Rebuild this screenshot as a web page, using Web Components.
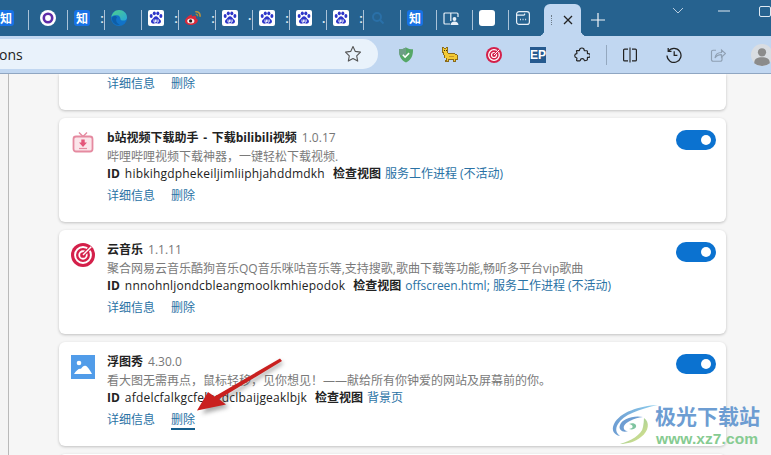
<!DOCTYPE html>
<html lang="zh">
<head>
<meta charset="utf-8">
<title>扩展</title>
<style>
  html, body { margin: 0; height: 100%; overflow: hidden; background: #f6f6f6; }
  body { font-family: "Open Sans", "Noto Sans CJK SC", sans-serif; }
</style>
</head>
<body>
<browser-window>
  <tab-strip slot="tabs">
    <strip-tab first><app-icon name="zhi"></app-icon></strip-tab>
    <strip-tab wide><app-icon name="ring"></app-icon></strip-tab>
    <strip-tab dots=":"><app-icon name="zhi"></app-icon></strip-tab>
    <strip-tab><app-icon name="edge"></app-icon></strip-tab>
    <strip-tab dots=":"><app-icon name="baidu"></app-icon></strip-tab>
    <strip-tab dots=":"><app-icon name="weibo"></app-icon></strip-tab>
    <strip-tab dots="·"><app-icon name="baidu"></app-icon></strip-tab>
    <strip-tab dots=":"><app-icon name="baidu"></app-icon></strip-tab>
    <strip-tab dots="."><app-icon name="baidu"></app-icon></strip-tab>
    <strip-tab dots=":"><app-icon name="baidu"></app-icon></strip-tab>
    <strip-tab><app-icon name="search"></app-icon></strip-tab>
    <strip-tab narrow><app-icon name="zhi"></app-icon></strip-tab>
    <strip-tab narrow><app-icon name="book"></app-icon></strip-tab>
    <strip-tab narrow><app-icon name="blank"></app-icon></strip-tab>
    <strip-tab narrow><app-icon name="win"></app-icon></strip-tab>
  </tab-strip>
  <tool-bar slot="toolbar">
    <app-icon name="shield"></app-icon>
    <app-icon name="cat"></app-icon>
    <app-icon name="target"></app-icon>
    <app-icon name="ep"></app-icon>
    <app-icon name="puzzle"></app-icon>
    <app-icon slot="after" name="split"></app-icon>
    <app-icon slot="after" name="history"></app-icon>
    <app-icon slot="after" name="share"></app-icon>
    <app-icon slot="after" name="avatar" size="22"></app-icon>
  </tool-bar>

  <ext-card links-only></ext-card>

  <ext-card ext-name="b站视频下载助手 - 下载bilibili视频" version="1.0.17"
    desc="哔哩哔哩视频下载神器，一键轻松下载视频." ext-id="hibkihgdphekeiljimliiphjahddmdkh">
    <app-icon slot="icon" name="tv" size="24"></app-icon>
    <a>服务工作进程</a> <a>(不活动)</a>
  </ext-card>

  <ext-card ext-name="云音乐" version="1.1.11"
    desc="聚合网易云音乐酷狗音乐QQ音乐咪咕音乐等,支持搜歌,歌曲下载等功能,畅听多平台vip歌曲" ext-id="nnnohnljondcbleangmoolkmhiepodok">
    <app-icon slot="icon" name="target" size="24"></app-icon>
    <a>offscreen.html;</a> <a>服务工作进程</a> <a>(不活动)</a>
  </ext-card>

  <ext-card ext-name="浮图秀" version="4.30.0" focused
    desc="看大图无需再点，鼠标轻移，见你想见！——献给所有你钟爱的网站及屏幕前的你。" ext-id="afdelcfalkgcfelngdclbaijgeaklbjk">
    <app-icon slot="icon" name="picture" size="24"></app-icon>
    <a>背景页</a>
  </ext-card>

  <ext-card blank></ext-card>

  <red-arrow slot="overlay"></red-arrow>
  <site-mark slot="overlay"></site-mark>
</browser-window>

<script>
  const ICONS = {
    zhi: `<div style="width:16px;height:16px;border-radius:3px;background:#1772e6;color:#fff;font:700 12px/16px 'Noto Sans CJK SC',sans-serif;text-align:center">知</div>`,
    ring: `<svg viewBox="0 0 16 16"><circle cx="8" cy="8" r="8" fill="#fff"/><circle cx="8" cy="8" r="4.2" fill="none" stroke="#5f2ca8" stroke-width="2.6"/></svg>`,
    edge: `<svg viewBox="0 0 16 16"><defs><linearGradient id="e1" x1="0" y1="0" x2="1" y2="1"><stop offset="0" stop-color="#4fd08a"/><stop offset="1" stop-color="#27a5d8"/></linearGradient></defs><circle cx="8" cy="8" r="8" fill="#1173c9"/><path d="M0.4 7C1 2.800 4.300 0 8 0c4.500 0 8 3.300 8 7.400 0 2.300-2 3.200-3.800 3.200-1.500 0-2.700-.5-2.700-1.300 0-2.300-1.200-4.100-3.700-4.100C3.500 5.200 1.500 5.600.4 7z" fill="url(#e1)"/><path d="M6 7.500c-1.800 1.800-.8 6 3 7.300-4.500.8-8-2.300-8-6C1 6 4.600 5 6 7.500z" fill="#0d5ea8"/></svg>`,
    baidu: `<svg viewBox="0 0 16 16"><rect width="16" height="16" rx="2" fill="#fff"/><g fill="#2d35c9"><ellipse cx="3.200" cy="6" rx="1.500" ry="1.900"/><ellipse cx="6.300" cy="3.300" rx="1.500" ry="1.900"/><ellipse cx="9.800" cy="3.300" rx="1.500" ry="1.900"/><ellipse cx="12.900" cy="6" rx="1.500" ry="1.900"/><path d="M8 6.200c-1.700 0-2.200 1.700-3.400 2.700-1.400 1.100-1.800 2-1.500 3.100.4 1.500 2 1.900 3 1.600.7-.2 1.200-.3 1.900-.3s1.200.1 1.900.3c1 .3 2.600-.1 3-1.600.3-1.100-.1-2-1.500-3.100C10.200 7.900 9.700 6.200 8 6.200z"/></g><path d="M6 9.500v2.600h1.500v-2.600M8.800 9.500v2.200q0 .5.7.5t.7-.5V9.500" fill="none" stroke="#fff" stroke-width=".9"/></svg>`,
    weibo: `<svg viewBox="0 0 16 16"><path d="M6.800 4.400C3.400 5.300-.2 8.800 0 11.300c.2 2.500 2.800 3.700 5.900 3.700 4.200 0 6.900-2.600 6.900-4.500 0-1.400-1.200-1.900-1.900-2.200.4-1.200.3-2.300-1.300-2.500-.9-.1-1.800.3-2.800.8z" fill="#d9293a"/><ellipse cx="5.800" cy="10.900" rx="3.600" ry="2.500" fill="#f7eceb"/><circle cx="5.600" cy="10.900" r="1.600" fill="#222"/><path d="M10.300 1.800c3-.6 5.400 1.700 4.600 5" fill="none" stroke="#b8923c" stroke-width="1.600"/><path d="M10.700 4.300c1.300-.2 2.200.8 1.800 2" fill="none" stroke="#a8863a" stroke-width="1.300"/></svg>`,
    search: `<svg viewBox="0 0 16 16"><circle cx="7" cy="7" r="4" fill="none" stroke="#2a70a8" stroke-width="2"/><path d="M10 10l3.500 3.500" stroke="#2a70a8" stroke-width="2"/></svg>`,
    book: `<svg viewBox="0 0 16 16" fill="none" stroke="#e8f0f8" stroke-width="1.200"><path d="M7.800 3H2a1 1 0 0 0-1 1v9a1 1 0 0 0 1 1h5M7.800 3v8M7.800 3H14a1 1 0 0 1 1 1v3"/><circle cx="11.500" cy="9" r="1.900" fill="#e8f0f8" stroke="none"/><path d="M7.500 15q.3-3.500 4-3.500t4 3.500z" fill="#e8f0f8" stroke="none"/></svg>`,
    blank: `<div style="width:16px;height:16px;border-radius:3px;background:#fff"></div>`,
    win: `<svg viewBox="0 0 16 16" fill="none" stroke="#e8f0f8" stroke-width="1.200"><rect x="1.600" y="1.600" width="12.800" height="12.800" rx="2.500"/><path d="M1.600 5.200h7.400l1-1.600"/><path d="M5 9.500h.9M7.600 9.500h.9M10.200 9.500h.9" stroke-width="1.500"/></svg>`,
    shield: `<svg viewBox="0 0 16 16"><path d="M8 .5c2 1.300 4.500 1.800 7 1.800.2 6-1.600 10.700-7 13.300C2.600 13 .8 8.300 1 2.300c2.500 0 5-.5 7-1.800z" fill="#55a767"/><path d="M8 .5c-2 1.300-4.500 1.800-7 1.800-.1 2 .1 4 .6 5.700H8z" fill="#6f9e86"/><path d="M4.800 7.800l2.300 2.300 4-4" fill="none" stroke="#fff" stroke-width="1.500"/></svg>`,
    cat: `<svg viewBox="0 0 16 16" shape-rendering="crispEdges"><path d="M0 0h2v1h2V0h2v6h7v1h2v1h1v5h-2v2h-3v-2H7v2H3v-2h1v-2H2V8H1V6H0z" fill="#8a6a1c"/><path d="M1 1h1v1h2V1h1v5h1v1h7v1h2v4h-2v2h-1v-2H6v2H5v-3H3V8H2V5H1z" fill="#f2c933"/><path d="M7 9h5v1H7z" fill="#c8972a"/><path d="M2 3h1v1H2zM4 3h1v1H4z" fill="#3c2c0c"/></svg>`,
    target: `<svg viewBox="0 0 16 16"><circle cx="8" cy="8" r="8" fill="#d4204a"/><circle cx="8" cy="8" r="5.300" fill="none" stroke="#fff" stroke-width="1.300"/><circle cx="8" cy="8" r="2.500" fill="none" stroke="#fff" stroke-width="1.200"/><path d="M8 8l5.500-5.500" stroke="#d4204a" stroke-width="2.400"/><path d="M8 8l5.500-5.500" stroke="#fff" stroke-width="1"/></svg>`,
    ep: `<div style="width:16px;height:16px;background:#265a8f;color:#fff;font:700 12px/16px 'Liberation Sans',sans-serif;text-align:center">EP</div>`,
    puzzle: `<svg viewBox="0 0 16 16" fill="none" stroke="#222" stroke-width="1.150" stroke-linejoin="round"><path d="M5.500 3.200c.2-3 4.700-2.800 4.700 0 0 .4 0 .5.300.5h2.300c.4 0 .6.200.6.600v2c0 .4.300.5.600.4 3-.9 3 4.300.1 3.600-.4-.1-.7 0-.7.400v1.800c0 .4-.2.600-.6.700l-2 .5c-.3.100-.4-.2-.5-.5-.7-2.300-3.700-2-4 .1 0 .3-.2.500-.6.500H3.200c-.4 0-.7-.3-.6-.7l.3-1.600c.1-.4-.1-.6-.4-.7-2.400-.6-2.300-3.900.1-4.200.3 0 .4-.3.300-.6L2.500 4.200c-.1-.4.100-.6.500-.6h2c.3 0 .5-.1.500-.4z"/></svg>`,
    split: `<svg viewBox="0 0 16 16" fill="none" stroke="#222" stroke-width="1.200"><path d="M6 2.100H2.600a1 1 0 0 0-1 1v9.800a1 1 0 0 0 1 1H6M10 2.100h3.400a1 1 0 0 1 1 1v9.800a1 1 0 0 1-1 1H10"/><path d="M8 .5v15" stroke="#333"/></svg>`,
    history: `<svg viewBox="0 0 16 16" fill="none" stroke="#222" stroke-width="1.250"><path d="M2.400 4.200A7 7 0 1 1 1 8.600"/><path d="M2.200 1v3.400h3.300"/><path d="M8.200 4.200v4.200h3.200"/></svg>`,
    share: `<svg viewBox="0 0 16 16" fill="none" stroke="#8fa0b3" stroke-width="1.150"><path d="M6 3.200H3a1.500 1.500 0 0 0-1.500 1.500v8A1.500 1.500 0 0 0 3 14.200h7.500a1.500 1.500 0 0 0 1.500-1.500V10"/><path d="M5 11c.4-3.500 3-5.500 6.500-5.500V3L15.500 6.500l-4 3.700V7.700C9 7.600 6.500 8.700 5 11z"/></svg>`,
    avatar: `<svg viewBox="0 0 24 24"><circle cx="12" cy="12" r="12" fill="#d9dde2"/><circle cx="12" cy="9" r="4.500" fill="#8b8b8b"/><path d="M3.500 21c0-5 3.500-6.500 8.500-6.500s8.500 1.500 8.500 6.500q-3.500 3-8.500 3t-8.500-3z" fill="#8b8b8b"/></svg>`,
    tv: `<svg viewBox="0 0 24 24" fill="none"><path d="M8 1.500l4 4 4-4" stroke="#e58aa0" stroke-width="1.400"/><rect x="2.500" y="5.500" width="19" height="15" rx="2.500" fill="#fbe5ea" stroke="#e58aa0" stroke-width="1.800"/><path d="M10.300 8.500h3.400v3h2.300L12 16l-4-4.500h2.300z" fill="#e4567a"/><path d="M8 17.500h8" stroke="#e58aa0" stroke-width="1.200"/></svg>`,
    picture: `<svg viewBox="0 0 24 24"><rect width="24" height="24" fill="#519ce9"/><circle cx="8" cy="8" r="2.300" fill="#fff"/><path d="M3 19c2.500-4 5-6 7-5.200 1.500-2.300 3-3.300 4.300-3 2.500.6 4.700 4.500 6.700 8.200z" fill="#fff"/></svg>`
  };

  class AppIcon extends HTMLElement {
    connectedCallback(){
      const size = this.getAttribute('size') || 16;
      const name = this.getAttribute('name');
      this.attachShadow({mode: 'open'}).innerHTML = `
        <style>
          :host { display: block; width: ${size}px; height: ${size}px; flex: none; }
          svg { display: block; width: 100%; height: 100%; }
        </style>${ICONS[name]}`;
    }
  }

  class BrowserWindow extends HTMLElement {
    constructor(){
      super();
      this.attachShadow({mode: 'open'}).innerHTML = `
        <style>
          :host { display: flex; flex-direction: column; width: 771px; height: 455px; position: relative; overflow: hidden; }
          .content { flex: 1; display: flex; min-height: 0; overflow: hidden; background: #f6f6f6; }
          .side { width: 8px; flex: none; border-right: 1px solid #b9b9b9; background: #f4f4f4; }
          .list { display: flex; flex-direction: column; gap: 8px; width: 667px; margin-left: 50px; flex: none; }
        </style>
        <slot name="tabs"></slot>
        <slot name="toolbar"></slot>
        <div class="content">
          <div class="side"></div>
          <div class="list"><slot></slot></div>
        </div>
        <slot name="overlay"></slot>`;
    }
  }

  class TabStrip extends HTMLElement {
    constructor(){
      super();
      this.attachShadow({mode: 'open'}).innerHTML = `
        <style>
          :host { display: flex; height: 36px; background: #26628f; color: #eef4fa; flex: none; overflow: hidden; position: relative; }
          .tabs { display: flex; margin-left: -9px; flex: none; }
          .active { width: 37px; height: 32px; margin-top: 4px; flex: none; background: #c1d7f1; border-radius: 6px 6px 0 0;
            display: flex; align-items: center; position: relative; box-sizing: border-box; padding-left: 7px; color: #222; }
          .active::before, .active::after { content: ""; position: absolute; bottom: 0; width: 6px; height: 6px; }
          .active::before { left: -6px; background: radial-gradient(circle at 0 0, transparent 6px, #c1d7f1 6.5px); }
          .active::after { right: -6px; background: radial-gradient(circle at 100% 0, transparent 6px, #c1d7f1 6.5px); }
          .dots { width: 2px; height: 10px; margin-right: 8px; border-left: 1px dotted #6d7c8a; margin-top: -1px; }
          .close { width: 12px; height: 12px; margin-top: -1px; }
          .plus { width: 14px; height: 14px; margin: 13px 0 0 10px; flex: none; }
          .winbtns { display: flex; flex: none; align-items: flex-start; margin-left: 67px; }
          .winbtns svg { display: block; }
        </style>
        <div class="tabs"><slot></slot></div>
        <div class="active">
          <span class="dots"></span>
          <svg class="close" viewBox="0 0 12 12"><path d="M2 2l8 8M10 2l-8 8" stroke="#222" stroke-width="1.300"/></svg>
        </div>
        <svg class="plus" viewBox="0 0 14 14"><path d="M7 0v14M0 7h14" stroke="#f2f6fa" stroke-width="1.200"/></svg>
        <div class="winbtns">
          <svg width="12" height="8" style="margin-top:7px" viewBox="0 0 12 8"><path d="M1 1l5 5 5-5" fill="none" stroke="#b9cde0" stroke-width="1"/></svg>
          <svg width="12" height="2" style="margin:10px 0 0 34px" viewBox="0 0 12 2"><path d="M0 1h12" stroke="#dfe9f2" stroke-width="1"/></svg>
          <svg width="12" height="12" style="margin:6px 0 0 29px" viewBox="0 0 12 12"><rect x=".5" y=".5" width="11" height="10" rx="1.500" fill="none" stroke="#dfe9f2"/></svg>
        </div>`;
    }
  }

  class StripTab extends HTMLElement {
    connectedCallback(){
      const dots = this.getAttribute('dots') || '';
      this.attachShadow({mode: 'open'}).innerHTML = `
        <style>
          :host { display: flex; align-items: center; width: 37px; height: 36px; box-sizing: border-box; position: relative; padding-left: 7px; flex: none; }
          :host([wide]) { width: 39px; padding-left: 12px; }
          :host([narrow]) { width: 36px; }
          :host([first]) .sep { display: none; }
          .sep { position: absolute; left: 0; top: 10px; height: 20px; width: 1px; background: #a9c2d8; }
          .dots { position: absolute; left: 33px; top: 10px; font: 700 12px/18px "Liberation Sans", sans-serif; color: #dbe6ef; }
        </style>
        <span class="sep"></span><slot></slot>
        ${dots ? `<span class="dots">${dots}</span>` : ''}`;
    }
  }

  class ToolBar extends HTMLElement {
    constructor(){
      super();
      this.attachShadow({mode: 'open'}).innerHTML = `
        <style>
          :host { display: flex; align-items: center; height: 37px; background: #c1d7f1; border-bottom: 1px solid #8fa6c2; flex: none; overflow: hidden; }
          .addr { width: 378px; height: 30px; margin-top: -1px; box-sizing: border-box; background: #e9f2fb; border-radius: 0 15px 15px 0;
            display: flex; align-items: center; justify-content: space-between; padding-right: 16px; flex: none;
            font: 14px "Open Sans", sans-serif; color: #222; margin-right: 6px; }
          .addr span { margin-left: -1px; }
          .addr svg { width: 18px; height: 18px; display: block; }
          .row { display: flex; flex: none; align-items: center; }
          ::slotted(app-icon) { margin: 0 14px; }
          ::slotted(app-icon[name=avatar]) { margin: 0 0 0 11px; }
          .divider { width: 1px; height: 20px; background: #94a8bf; margin: 0 1px 0 2px; flex: none; }
        </style>
        <div class="addr"><span>ons</span>
          <svg viewBox="0 0 18 18"><path d="M9 1.500l2.300 4.900 5.200.7-3.800 3.700 1 5.300L9 13.500l-4.700 2.600 1-5.300L1.500 7.100l5.200-.7z" fill="none" stroke="#555" stroke-width="1.100" stroke-linejoin="round"/></svg>
        </div>
        <div class="row"><slot></slot></div>
        <span class="divider"></span>
        <div class="row"><slot name="after"></slot></div>`;
    }
  }

  class ExtCard extends HTMLElement {
    connectedCallback(){
      const linksOnly = this.hasAttribute('links-only');
      const a = n => this.getAttribute(n) || '';
      const links = `<div class="links"><a>详细信息</a><a class="${this.hasAttribute('focused') ? 'focused' : ''}">删除</a></div>`;
      const body = this.hasAttribute('blank') ? '' : linksOnly ? `<div></div><div>${links}</div>` : `
        <div class="icon"><slot name="icon"></slot></div>
        <div>
          <div class="title"><b>${a('ext-name')}</b><span class="ver">${a('version')}</span></div>
          <div class="desc">${a('desc')}</div>
          <div class="idline"><b>ID</b><span class="id">${a('ext-id')}</span><b class="view">检查视图</b><span class="views"><slot></slot></span></div>
          ${links}
        </div>
        <div class="toggle"></div>`;
      this.attachShadow({mode: 'open'}).innerHTML = `
        <style>
          :host { display: grid; grid-template-columns: 48px 1fr auto; box-sizing: border-box; height: 104px; flex: none;
            padding-top: 12px; background: #fff; border-radius: 6px; box-shadow: 0 1px 3px rgba(0,0,0,.22);
            font: 12px/16px "Open Sans", "Noto Sans CJK SC", sans-serif; color: #222; }
          :host([links-only]) { height: 36px; padding-top: 2px; border-radius: 0 0 6px 6px; }
          :host([blank]) { padding: 0; }
          .icon { padding: 1px 0 0 12px; }
          b { font-weight: 700; }
          .title b { word-spacing: 1.500px; }
          .ver { color: #777; margin-left: 5px; }
          .title, .desc, .idline { white-space: nowrap; }
          .desc { color: #7a7a7a; margin-top: 3px; }
          .idline { display: flex; margin-top: 1px; }
          .id { margin-left: 5px; letter-spacing: .2px; }
          .view { margin-left: 8px; }
          .views { margin-left: 4px; color: #2a72a5; }
          .links { display: flex; gap: 16px; margin-top: 6px; color: #2a72a5; }
          :host([links-only]) .links { margin-top: 0; }
          .links a { display: block; height: 16px; }
          .links .focused { border-bottom: 2px solid #155e8c; }
          .toggle { width: 40px; height: 20px; margin-right: 10px; border-radius: 10px; background: #0b72d0; position: relative; }
          .toggle::after { content: ""; position: absolute; right: 5px; top: 5px; width: 10px; height: 10px; border-radius: 50%; background: #fff; }
        </style>${body}`;
    }
  }

  class RedArrow extends HTMLElement {
    constructor(){
      super();
      this.attachShadow({mode: 'open'}).innerHTML = `
        <style>:host { position: absolute; left: 180px; top: 350px; width: 120px; height: 80px; pointer-events: none; }
        svg { display: block; overflow: visible; }</style>
        <svg width="120" height="80" viewBox="180 350 120 80">
          <defs><filter id="b" x="-30%" y="-30%" width="160%" height="160%"><feGaussianBlur stdDeviation="2"/></filter></defs>
          <path d="M283 364L222 402L229 407L202 414L213 396L219 400L281 361z" fill="#555" opacity=".5" filter="url(#b)"/>
          <path d="M280 358.500L282 361L219 399L226 404.500L197 410.500L208 392L214.500 396.500z" fill="#c9201f"/>
        </svg>`;
    }
  }

  class SiteMark extends HTMLElement {
    constructor(){
      super();
      this.attachShadow({mode: 'open'}).innerHTML = `
        <style>
          :host { position: absolute; left: 611px; top: 403px; display: flex; align-items: flex-start; pointer-events: none; }
          svg { display: block; flex: none; }
          .txt { margin-left: -4px; white-space: nowrap; }
          .cn { font: 700 21px/25px "Noto Sans CJK SC", sans-serif; color: #6d9dd2; }
          .en { font: 700 15.500px/20px "Liberation Sans", sans-serif; color: #86cb91; margin-top: 1px; letter-spacing: .1px; margin-left: 1px; }
        </style>
        <svg width="48" height="44" viewBox="0 0 48 44" fill="none">
          <defs>
            <linearGradient id="g1" x1="0" y1="0" x2="1" y2="0"><stop offset="0" stop-color="#6d9dd2"/><stop offset="1" stop-color="#8fd0ee"/></linearGradient>
            <linearGradient id="g2" x1="0" y1="0" x2="1" y2="1"><stop offset="0" stop-color="#7fc4a0"/><stop offset="1" stop-color="#e5e58a"/></linearGradient>
          </defs>
          <path d="M47 2C28 3 9 9 3 21c-3 6 0 11 6 12-4-3-5-7-2-12C12 12 28 6 47 2z" fill="url(#g1)"/>
          <path d="M32 14C22 12 11 16 9 22c-2 5 3 8 8 6-3 0-5-2-4-5 2-4 10-8 19-9z" fill="#6d9dd2"/>
          <path d="M33 15c6 4 5 13-3 19-6 5-14 7-21 7 10-3 22-9 23-17 .5-3 1-6 1-9z" fill="url(#g2)"/>
          <path d="M18 21c4-2 8 0 7 3-1 2-4 3-7 2 3-.5 4-1.500 3.500-3-.5-1-2-2-3.500-2z" fill="#7fc4a0"/>
        </svg>
        <div class="txt"><div class="cn">极光下载站</div><div class="en">www.xz7.com</div></div>`;
    }
  }

  customElements.define('app-icon', AppIcon);
  customElements.define('browser-window', BrowserWindow);
  customElements.define('tab-strip', TabStrip);
  customElements.define('strip-tab', StripTab);
  customElements.define('tool-bar', ToolBar);
  customElements.define('ext-card', ExtCard);
  customElements.define('red-arrow', RedArrow);
  customElements.define('site-mark', SiteMark);
</script>
</body>
</html>
